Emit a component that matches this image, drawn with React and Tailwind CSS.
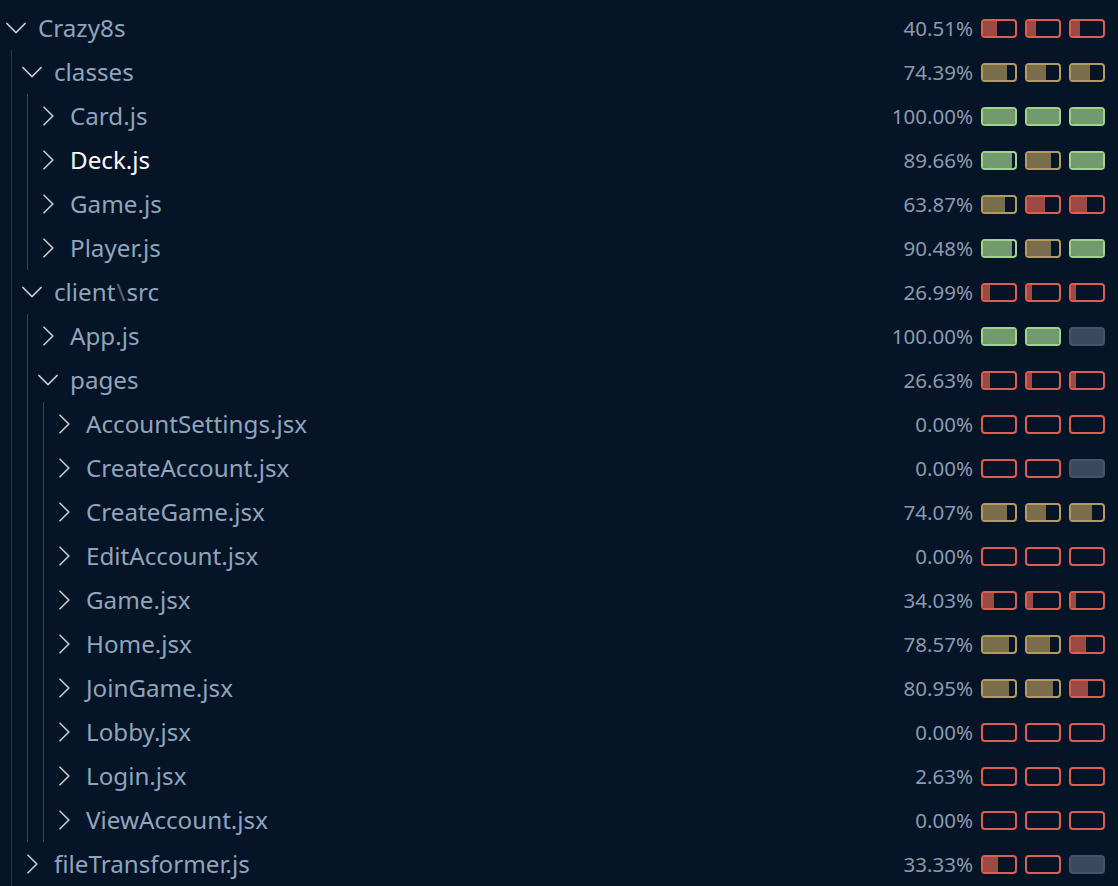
import React from 'react';

const BAR = {
  r: { box: 'border-[#de5f4f]', fill: 'bg-[#9b4a46]' },
  y: { box: 'border-[#b39a5f]', fill: 'bg-[#7a6d4b]' },
  g: { box: 'border-[#a1d38b]', fill: 'bg-[#739a6e]' },
  n: { box: 'border-[#435368] bg-[#3a495d]', fill: '' },
};

const tree = {
  name: 'Crazy8s', pct: '40.51%', bars: [['r', 43], ['r', 28], ['r', 27]], open: true,
  children: [
    {
      name: 'classes', pct: '74.39%', bars: [['y', 74], ['y', 60], ['y', 59]], open: true,
      children: [
        { name: 'Card.js', pct: '100.00%', bars: [['g', 100], ['g', 100], ['g', 100]] },
        { name: 'Deck.js', pct: '89.66%', bars: [['g', 90], ['y', 74], ['g', 100]], active: true },
        { name: 'Game.js', pct: '63.87%', bars: [['y', 68], ['r', 55], ['r', 50]] },
        { name: 'Player.js', pct: '90.48%', bars: [['g', 90], ['y', 76], ['g', 100]] },
      ],
    },
    {
      name: 'client\\src', pct: '26.99%', bars: [['r', 22], ['r', 16], ['r', 15]], open: true,
      children: [
        { name: 'App.js', pct: '100.00%', bars: [['g', 100], ['g', 100], ['n', 0]] },
        {
          name: 'pages', pct: '26.63%', bars: [['r', 22], ['r', 16], ['r', 15]], open: true,
          children: [
            { name: 'AccountSettings.jsx', pct: '0.00%', bars: [['r', 0], ['r', 0], ['r', 0]] },
            { name: 'CreateAccount.jsx', pct: '0.00%', bars: [['r', 0], ['r', 0], ['n', 0]] },
            { name: 'CreateGame.jsx', pct: '74.07%', bars: [['y', 74], ['y', 60], ['y', 66]] },
            { name: 'EditAccount.jsx', pct: '0.00%', bars: [['r', 0], ['r', 0], ['r', 0]] },
            { name: 'Game.jsx', pct: '34.03%', bars: [['r', 34], ['r', 18], ['r', 15]] },
            { name: 'Home.jsx', pct: '78.57%', bars: [['y', 81], ['y', 73], ['r', 46]] },
            { name: 'JoinGame.jsx', pct: '80.95%', bars: [['y', 81], ['y', 80], ['r', 53]] },
            { name: 'Lobby.jsx', pct: '0.00%', bars: [['r', 0], ['r', 0], ['r', 0]] },
            { name: 'Login.jsx', pct: '2.63%', bars: [['r', 0], ['r', 0], ['r', 0]] },
            { name: 'ViewAccount.jsx', pct: '0.00%', bars: [['r', 0], ['r', 0], ['r', 0]] },
          ],
        },
      ],
    },
    { name: 'fileTransformer.js', pct: '33.33%', bars: [['r', 48], ['r', 0], ['n', 0]] },
  ],
};

function Chevron({ open }) {
  return (
    <svg width="20" height="20" viewBox="0 0 20 20" className="shrink-0" fill="none" stroke="#c3cbd3" strokeWidth="1.6">
      {open ? <polyline points="0.5,5 10,14.5 19.5,5" /> : <polyline points="5.5,0.8 14.8,10 5.5,19.2" />}
    </svg>
  );
}

function Bar({ kind, value }) {
  const c = BAR[kind];
  return (
    <div className={`w-[36px] h-[19px] rounded-[4px] border-2 overflow-hidden ${c.box}`}>
      {value > 0 && <div className={`h-full ${c.fill}`} style={{ width: `${value}%` }} />}
    </div>
  );
}

function Label({ name, active }) {
  if (name.includes('\\')) {
    const [a, b] = name.split('\\');
    return (
      <span>
        {a}
        <span className="text-[#56657a] mx-[1px]">\</span>
        {b}
      </span>
    );
  }
  return <span className={active ? 'text-white' : ''}>{name}</span>;
}

function Node({ node, root }) {
  const hasKids = !!node.children;
  return (
    <div>
      <div className={`h-[44px] flex items-center pr-[13px] ${root ? 'pl-[6px]' : 'pl-[10px]'}`}>
        <Chevron open={node.open} />
        <div className="ml-[12px] flex-1 text-[24.2px] text-[#8fa5bc] whitespace-nowrap leading-none">
          <Label name={node.name} active={node.active} />
        </div>
        <div className="text-[20.5px] text-[#8a9bb0] leading-none">{node.pct}</div>
        <div className="flex gap-[8px] ml-[8px]">
          {node.bars.map(([k, v], i) => (
            <Bar key={i} kind={k} value={v} />
          ))}
        </div>
      </div>
      {hasKids && (
        <div className={`border-l ${root ? 'ml-[11px] border-[#2e3744]' : 'ml-[15px] border-[#39434f]'}`}>
          {node.children.map((c) => (
            <Node key={c.name} node={c} />
          ))}
        </div>
      )}
    </div>
  );
}

export default function App() {
  return (
    <div className="w-[1118px] h-[886px] overflow-hidden bg-[#051427] pt-[6px]" style={{ fontFamily: '"Noto Sans", "Open Sans", sans-serif' }}>
      <Node node={tree} root />
    </div>
  );
}
